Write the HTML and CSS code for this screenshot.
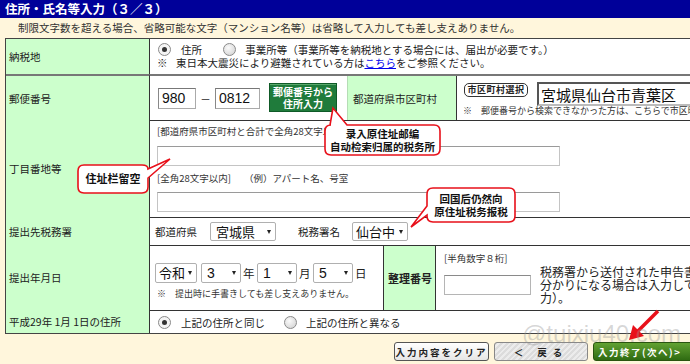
FILE: index.html
```html
<!DOCTYPE html>
<html lang="ja">
<head>
  <meta charset="UTF-8">
  <title>住所・氏名等入力</title>
  <link rel="stylesheet" href="styles.css">
</head>
<body>
  <div class="title">住所・氏名等入力（３／３）</div>
  <p class="lead">制限文字数を超える場合、省略可能な文字（マンション名等）は省略して入力しても差し支えありません。</p>

  <div class="form">
    <!-- 納税地 -->
    <div class="label">納税地</div>
    <div class="cell first tax">
      <div class="line">
        <span class="radio on"></span><span class="opt">住所</span>
        <span class="radio"></span><span>事業所等（事業所等を納税地とする場合には、届出が必要です。）</span>
      </div>
      <div class="line"><span class="mark">※</span>東日本大震災により避難されている方は<a href="#">こちら</a>をご参照ください。</div>
    </div>

    <!-- 郵便番号 -->
    <div class="label second">郵便番号</div>
    <div class="cell second zip-row">
      <div class="zip">
        <input class="in zip3" value="980">
        <span class="dash">－</span>
        <input class="in zip4" value="0812">
        <button class="green-btn">郵便番号から<br>住所入力</button>
      </div>
      <div class="sublabel">都道府県市区町村</div>
      <div class="city">
        <div class="city-top">
          <span class="pill">市区町村選択</span>
          <input class="in city-in" value="宮城県仙台市青葉区">
        </div>
        <div class="tiny"><span class="mark">※</span>郵便番号から検索できなかった方は、こちらで市区町村を選択してください。</div>
      </div>
    </div>

    <!-- 丁目番地等 -->
    <div class="label">丁目番地等</div>
    <div class="cell addr">
      <div class="small">[都道府県市区町村と合計で全角28文字以内]</div>
      <input class="in wide">
      <div class="small note2">[全角28文字以内]<span class="ex">（例）アパート名、号室</span></div>
      <input class="in wide in2">
    </div>

    <!-- 提出先税務署 -->
    <div class="label">提出先税務署</div>
    <div class="cell office">
      <span>都道府県</span>
      <span class="sel pref">宮城県</span>
      <span class="office-name">税務署名</span>
      <span class="sel ofc">仙台中</span>
    </div>

    <!-- 提出年月日 -->
    <div class="label">提出年月日</div>
    <div class="cell date-row">
      <div class="date">
        <div class="date-sel">
          <span class="sel era">令和</span>
          <span class="sel num">3</span><span class="unit">年</span>
          <span class="sel num">1</span><span class="unit">月</span>
          <span class="sel num">5</span><span class="unit">日</span>
        </div>
        <div class="tiny"><span class="mark">※</span>提出時に手書きしても差し支えありません。</div>
      </div>
      <div class="sublabel ref">整理番号</div>
      <div class="ref-cell">
        <div class="ref-input">
          <div class="small">[半角数字８桁]</div>
          <input class="in ref-in">
        </div>
        <p class="ref-text">税務署から送付された申告書等に記載された整理番号がお<br>分かりになる場合は入力してください（任意入<br>力）。</p>
      </div>
    </div>

    <!-- 平成29年1月1日の住所 -->
    <div class="label">平成29年 1月 1日の住所</div>
    <div class="cell old">
      <span class="radio on"></span><span class="opt">上記の住所と同じ</span>
      <span class="radio"></span><span>上記の住所と異なる</span>
    </div>
  </div>

  <div class="actions">
    <button class="btn clear">入力内容をクリア</button>
    <button class="btn back">＜ 戻る</button>
    <button class="btn next">入力終了(次へ)&gt;</button>
  </div>

  <!-- 注释 -->
  <svg class="marks" width="690" height="364" viewBox="0 0 690 364">
    <path class="bubble" d="M331,125 L330,125 L333,108 L347,125 L434,125 Q440,125 440,131 L440,149 Q440,155 434,155 L331,155 Q325,155 325,149 L325,131 Q325,125 331,125 Z"/>
    <path class="bubble" d="M84,165 L142,165 Q148,165 148,169 L170,159 L148,178 L148,187 Q148,193 142,193 L84,193 Q78,193 78,187 L78,171 Q78,165 84,165 Z"/>
    <path class="bubble" d="M433,188 L509,188 Q515,188 515,194 L515,216 Q515,222 509,222 L433,222 Q427,222 427,216 L427,215 L411,227 L427,206 L427,194 Q427,188 433,188 Z"/>
    <line x1="658" y1="311" x2="637" y2="332" stroke="#e8101a" stroke-width="3.5"/>
    <polygon points="629,340 633,325 644,336" fill="#e8101a"/>
  </svg>
  <div class="tip tip1">录入原住址邮编<br>自动检索归属的税务所</div>
  <div class="tip tip2">住址栏留空</div>
  <div class="tip tip3">回国后仍然向<br>原住址税务报税</div>
  <div class="watermark">@tuixiu40.com</div>
</body>
</html>
```

FILE: styles.css
```css
* {
  margin: 0;
  padding: 0;
  box-sizing: border-box;
}

body {
  position: relative;
  width: 690px;
  height: 364px;
  overflow: hidden;
  background: #fff6dc;
  font-family: "Noto Sans CJK JP", sans-serif;
  font-size: 10.5px;
  color: #222;
}

.title {
  height: 18px;
  background: #000099;
  color: #fff;
  font-weight: bold;
  font-size: 12.5px;
  line-height: 18px;
  padding-left: 5px;
}

.lead {
  height: 20px;
  line-height: 20px;
  padding-left: 18px;
  color: #333;
}

.form {
  display: grid;
  grid-template-columns: 144px 562px;
  grid-template-rows: 35px 46px 97px 28px 65px 23px;
  margin-left: 5px;
  width: 706px;
  border: 1px solid #444;
  border-right: none;
  background: #fff;
}

.label {
  display: flex;
  align-items: center;
  padding-left: 3px;
  background: #ccffcc;
  border-right: 1px solid #333;
}

.cell {
  border-top: 1px solid #333;
}

.cell.first {
  border-top: none;
}

.label.second,
.cell.second {
  border-top: 2px solid #777;
}

.mark {
  display: inline-block;
  width: 19px;
}

a {
  color: #0000ee;
}

/* radio */
.radio {
  display: inline-block;
  width: 13px;
  height: 13px;
  border: 1px solid #8a8a8a;
  border-radius: 50%;
  background: radial-gradient(circle at 40% 35%, #fafafa, #cfcfcf);
  vertical-align: -2px;
  position: relative;
}

.radio.on {
  background: #f4f4f4;
}

.radio.on::after {
  content: "";
  position: absolute;
  left: 3px;
  top: 3px;
  width: 5px;
  height: 5px;
  border-radius: 50%;
  background: #333;
}

.radio + span {
  margin-left: 9px;
}

.radio + .opt {
  margin-left: 10px;
  margin-right: 19px;
}

.tax {
  padding: 4px 0 0 7px;
}

.tax .line {
  line-height: 13px;
  white-space: nowrap;
}

.tax .line:first-child {
  padding-left: 1px;
}

/* inputs */
.in {
  height: 21px;
  border: 1px solid #aaa;
  border-top-color: #777;
  border-left-color: #888;
  background: #fff;
  font-family: "Liberation Sans", sans-serif;
  font-size: 14px;
  padding-left: 3px;
  color: #111;
}

.zip-row {
  display: flex;
}

.zip {
  flex: none;
  width: 197px;
  display: flex;
  align-items: center;
  padding-left: 8px;
}

.zip3 {
  width: 38px;
}

.zip4 {
  width: 45px;
}

.dash {
  width: 19px;
  text-align: center;
}

.green-btn {
  flex: none;
  width: 68px;
  height: 29px;
  margin-left: 9px;
  margin-top: -1px;
  background: #1f7b3b;
  border: 1px solid #0f5a27;
  color: #fff;
  font-family: "Noto Sans CJK JP", sans-serif;
  font-weight: bold;
  font-size: 10px;
  line-height: 12px;
  white-space: nowrap;
  box-shadow: inset 0 1px 0 #5aa86c;
}

.sublabel {
  flex: none;
  display: flex;
  align-items: center;
  width: 110px;
  padding-left: 5px;
  background: #ccffcc;
  border-left: 1px solid #b5ddb5;
  border-right: 1px solid #333;
  white-space: nowrap;
}

.city {
  padding: 6px 0 0 6px;
  white-space: nowrap;
}

.city-top {
  display: flex;
  align-items: center;
  padding-left: 1px;
}

.pill {
  flex: none;
  display: inline-block;
  width: 64px;
  height: 14px;
  margin-top: -8px;
  border: 1px solid #333;
  border-radius: 5px;
  font-size: 9px;
  font-weight: bold;
  line-height: 12px;
  text-align: center;
  letter-spacing: 0.5px;
}

.city-in {
  width: 200px;
  height: 24px;
  margin-left: 9px;
  border: 2px solid #555;
  border-right-color: #bbb;
  border-bottom-color: #bbb;
  font-family: "Noto Sans CJK JP", sans-serif;
  font-size: 15px;
  line-height: 20px;
  padding-left: 2px;
}

.tiny {
  font-size: 9px;
  line-height: 9px;
  color: #333;
  white-space: nowrap;
}

.tiny .mark {
  width: 18px;
}

/* 丁目番地等 */
.addr {
  padding: 4px 0 0 7px;
}

.small {
  font-size: 9.5px;
  line-height: 12px;
  color: #333;
  white-space: nowrap;
}

.wide {
  display: block;
  width: 403px;
  height: 20px;
  margin-top: 9px;
  border-color: #c4c4c4;
  border-top-color: #9a9a9a;
}

.note2 {
  margin-top: 6px;
}

.ex {
  margin-left: 13px;
}

.in2 {
  margin-top: 8px;
}

/* selects */
.sel {
  flex: none;
  display: inline-flex;
  align-items: center;
  justify-content: space-between;
  height: 20px;
  padding: 0 4px 0 3px;
  border: 1px solid #b0b0b0;
  border-radius: 2px;
  background: #fff;
  font-size: 13px;
  line-height: 18px;
  color: #111;
  white-space: nowrap;
}

.sel::after {
  content: "";
  flex: none;
  border-left: 2.5px solid transparent;
  border-right: 2.5px solid transparent;
  border-top: 4px solid #222;
  margin-left: 3px;
}

.office {
  display: flex;
  align-items: center;
  padding-left: 5px;
  white-space: nowrap;
}

.pref {
  width: 66px;
  height: 19px;
  margin-left: 13px;
  padding-left: 5px;
}

.office-name {
  margin-left: 22px;
}

.ofc {
  width: 56px;
  height: 19px;
  margin-left: 12px;
}

/* 提出年月日 */
.date-row {
  display: flex;
}

.date {
  flex: none;
  width: 233px;
  padding: 17px 0 0 5px;
}

.date-sel {
  display: flex;
  align-items: center;
  height: 20px;
}

.era {
  width: 42px;
  margin-right: 4px;
}

.num {
  width: 40px;
  padding-left: 5px;
  font-family: "Liberation Sans", sans-serif;
  font-size: 14px;
}

.unit {
  flex: none;
  width: 16px;
  padding-left: 2px;
  font-size: 11.5px;
}

.date .tiny {
  margin-top: 6px;
  padding-left: 2px;
}

.ref {
  width: 53px;
  border-left: 1px solid #333;
  font-weight: bold;
  font-size: 11px;
  padding-left: 4px;
}

.ref-cell {
  display: flex;
  padding-left: 8px;
  white-space: nowrap;
}

.ref-input {
  flex: none;
  width: 96px;
  padding-top: 6px;
}

.ref-in {
  display: block;
  width: 87px;
  height: 20px;
  margin-top: 11px;
  border-color: #b5b5b5;
  border-top-color: #8a8a8a;
}

.ref-text {
  padding-top: 19px;
  font-size: 12px;
  line-height: 13px;
  color: #222;
}

/* 平成29年 */
.old {
  display: flex;
  align-items: center;
  padding-left: 8px;
  white-space: nowrap;
}

/* buttons */
.actions {
  display: flex;
  margin: 8px 0 0 394px;
  gap: 5px;
}

.btn {
  flex: none;
  height: 19px;
  border: 1px solid #555;
  border-radius: 3px;
  font-family: "Noto Sans CJK JP", sans-serif;
  font-weight: bold;
  font-size: 9.5px;
  line-height: 16px;
  letter-spacing: 2px;
  color: #222;
  white-space: nowrap;
}

.clear {
  width: 95px;
  background: linear-gradient(#ffffff, #e6e6e6);
}

.back {
  width: 94px;
  background: repeating-linear-gradient(135deg, #dcdcdc 0, #dcdcdc 2px, #ececec 2px, #ececec 4px);
  border-color: #888;
  letter-spacing: 6px;
}

.next {
  width: 110px;
  background: linear-gradient(#62a232, #2f6b12);
  border-color: #2a5510;
  color: #fff;
  letter-spacing: 1.5px;
  text-align: left;
  padding-left: 4px;
}

/* overlays */
.marks {
  position: absolute;
  left: 0;
  top: 0;
  pointer-events: none;
}

.bubble {
  fill: #fff;
  stroke: #e8101a;
  stroke-width: 1.6;
}

.tip {
  position: absolute;
  font-family: "Noto Sans CJK SC", sans-serif;
  font-weight: bold;
  font-size: 10.5px;
  line-height: 13px;
  text-align: center;
  color: #111;
}

.tip1 {
  left: 325px;
  top: 127px;
  width: 115px;
}

.tip2 {
  left: 78px;
  top: 172px;
  width: 70px;
  font-size: 11px;
}

.tip3 {
  left: 427px;
  top: 192px;
  width: 88px;
}

.watermark {
  position: absolute;
  left: 522px;
  top: 320px;
  font-family: "Liberation Sans", sans-serif;
  font-size: 24px;
  color: rgba(150, 150, 150, 0.38);
  pointer-events: none;
}
```
